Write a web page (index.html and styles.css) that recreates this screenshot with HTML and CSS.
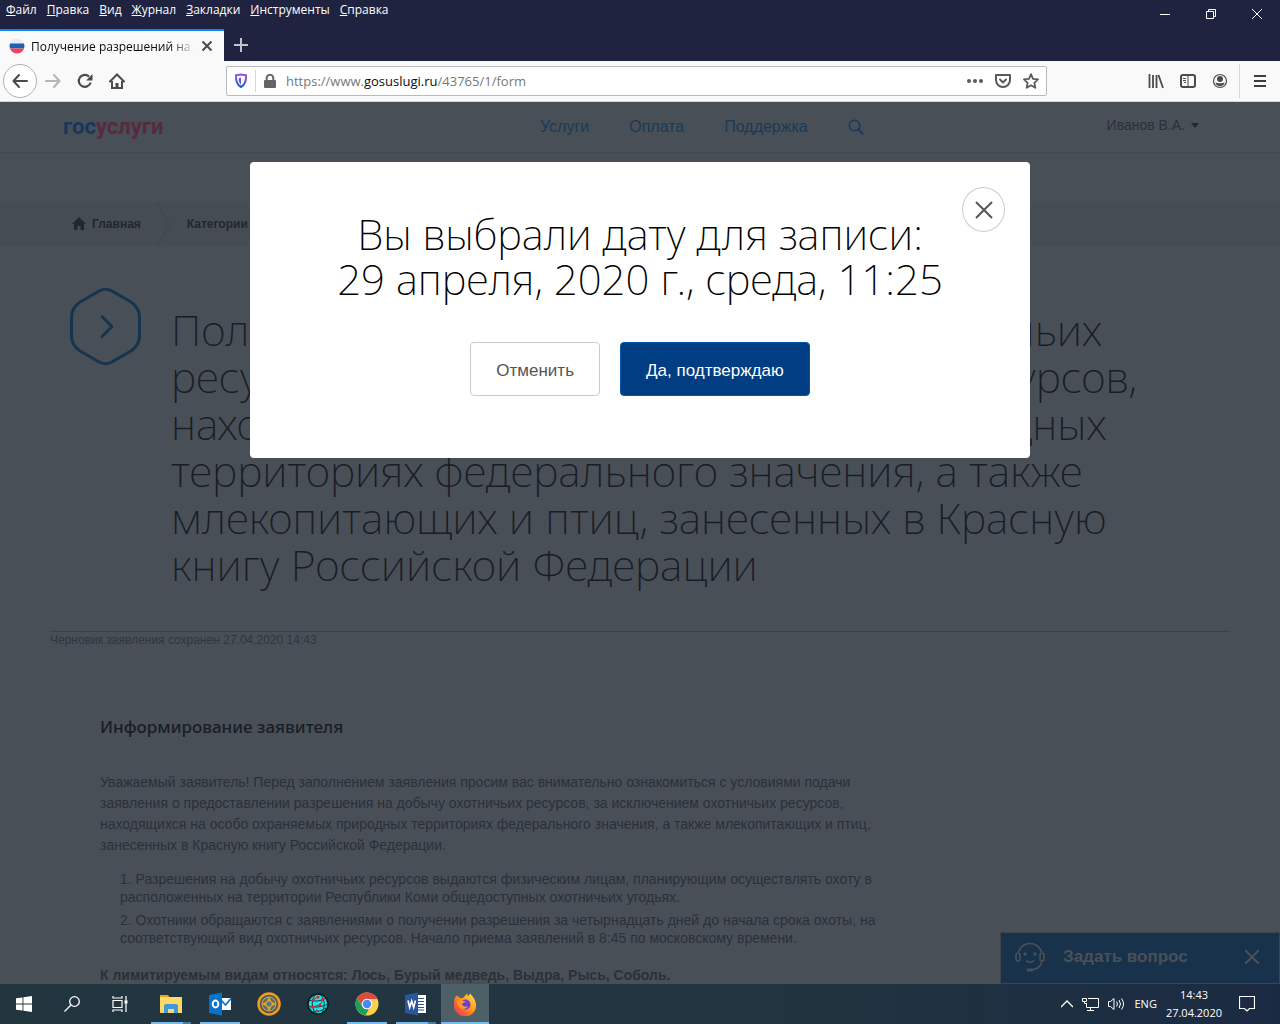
FILE: index.html
```
<!DOCTYPE html>
<html lang="ru">
  <head>
    <meta charset="utf-8">
    <title>Получение разрешений на добычу охотничьих ресурсов</title>
    <link rel="stylesheet" href="styles.css">
  </head>
  <body>
    <header class="browser">
      <div class="titlebar">
        <div class="titlebar-left">
          <nav class="menu">
            <a href="#"><u>Ф</u>айл</a>
            <a href="#"><u>П</u>равка</a>
            <a href="#"><u>В</u>ид</a>
            <a href="#"><u>Ж</u>урнал</a>
            <a href="#"><u>З</u>акладки</a>
            <a href="#"><u>И</u>нструменты</a>
            <a href="#"><u>С</u>правка</a>
          </nav>
          <div class="tabs">
            <div class="tab">
              <svg width="16" height="16" viewBox="0 0 16 16"><clipPath id="flag"><circle cx="8" cy="8" r="7.5"/></clipPath><g clip-path="url(#flag)"><path fill="#e9ecef" d="M0 0h16v6H0z"/><path fill="#1d5fb4" d="M0 5.5h16v5H0z"/><path fill="#f5405a" d="M0 10.5h16V16H0z"/></g></svg>
              <span class="tab-title">Получение разрешений на до</span>
              <button class="tab-close" aria-label="Закрыть вкладку"><svg width="12" height="12" viewBox="0 0 12 12"><path d="M1.5 1.5l9 9m0-9l-9 9" stroke="#4a4a4f" stroke-width="2"/></svg></button>
            </div>
            <button class="tab-new" aria-label="Новая вкладка"><svg width="14" height="14" viewBox="0 0 14 14"><path d="M7 0v14M0 7h14" stroke="#c3c3d0" stroke-width="2"/></svg></button>
          </div>
        </div>
        <div class="window-buttons">
          <button aria-label="Свернуть"><svg width="10" height="10"><path d="M0 5.5h10" stroke="#fff"/></svg></button>
          <button aria-label="Восстановить"><svg width="10" height="10" fill="none" stroke="#fff"><path d="M.5 2.500h7v7h-7zM2.500 2.500v-2h7v7h-2"/></svg></button>
          <button aria-label="Закрыть"><svg width="10" height="10"><path d="M0 0l10 10m0-10L0 10" stroke="#fff"/></svg></button>
        </div>
      </div>

      <div class="toolbar">
        <div class="tools">
          <button class="back" aria-label="Назад"><svg width="16" height="16" viewBox="0 0 16 16"><path d="M15 8H1.500M7 2L1.500 8 7 14" fill="none" stroke="#4a4a4f" stroke-width="2" stroke-linecap="round" stroke-linejoin="round"/></svg></button>
          <button aria-label="Вперёд"><svg width="16" height="16" viewBox="0 0 16 16"><path d="M1 8h13.500M9 2l5.500 6L9 14" fill="none" stroke="#b5b5b7" stroke-width="2" stroke-linecap="round" stroke-linejoin="round"/></svg></button>
          <button aria-label="Обновить"><svg width="16" height="16" viewBox="0 0 16 16"><path d="M13.600 9.500A6 6 0 1 1 12 3.600" fill="none" stroke="#4a4a4f" stroke-width="2.200"/><path d="M15.500 1v6.500H9z" fill="#4a4a4f"/></svg></button>
          <button aria-label="Домой"><svg width="16" height="16" viewBox="0 0 16 16" fill="none" stroke="#4a4a4f" stroke-width="2"><path d="M1 8.500L8 1.500l7 7" stroke-linecap="round"/><path d="M3 8v7h10V8"/><path d="M8 15v-5" stroke-width="3"/></svg></button>
        </div>
        <form class="urlbar">
          <svg width="14" height="16" viewBox="0 0 14 16"><defs><linearGradient id="sh" x2="0" y2="1"><stop stop-color="#8f55e8"/><stop offset="1" stop-color="#2b5fd9"/></linearGradient></defs><path d="M7 1.500c2 .5 3.500.7 5 .7.300 6-.5 9.500-5 11.800-4.500-2.300-5.300-5.800-5-11.800 1.500 0 3-.2 5-.7z" fill="none" stroke="url(#sh)" stroke-width="2"/><path d="M7 4.500v7C5 10 4.700 8 4.700 5z" fill="url(#sh)"/></svg>
          <span class="urlbar-line"></span>
          <svg width="12" height="14" viewBox="0 0 12 14"><path d="M2.700 7V4a3.300 3.300 0 0 1 6.600 0v3" fill="none" stroke="#666" stroke-width="2"/><rect y="6" width="12" height="8" rx="1" fill="#666"/></svg>
          <a class="url" href="#">https://www.<b>gosuslugi.ru</b>/43765/1/form</a>
          <svg width="16" height="16" viewBox="0 0 16 16" fill="#5a5a5d"><circle cx="2" cy="8" r="2"/><circle cx="8" cy="8" r="2"/><circle cx="14" cy="8" r="2"/></svg>
          <svg width="16" height="16" viewBox="0 0 16 16" fill="none" stroke="#5a5a5d" stroke-width="2" stroke-linejoin="round" stroke-linecap="round"><path d="M1 2h14v5a7 7 0 0 1-14 0z"/><path d="M5 6.500l3 3 3-3"/></svg>
          <svg width="16" height="16" viewBox="0 0 16 16"><path d="M8 1.200l2 4.600 5 .6-3.600 3.400.9 5L8 12.300l-4.300 2.500.9-5L1 6.400l5-.6z" fill="none" stroke="#5a5a5d" stroke-width="1.800" stroke-linejoin="round"/></svg>
        </form>
        <div class="tools tools-right">
          <button aria-label="Библиотека"><svg width="16" height="16" viewBox="0 0 16 16"><path d="M1.500 1v14M5 2v13M8.500 2v13M10.500 2l4.500 13" fill="none" stroke="#4a4a4f" stroke-width="1.800"/></svg></button>
          <button aria-label="Боковая панель"><svg width="16" height="16" viewBox="0 0 16 16" fill="none" stroke="#4a4a4f"><rect x="1" y="2" width="14" height="12" rx="2" stroke-width="2"/><path d="M8 2v12M3 5.500h3M3 7.500h3M4 9.500h2"/></svg></button>
          <button aria-label="Профиль"><svg width="16" height="16" viewBox="0 0 16 16" fill="#4a4a4f"><circle cx="8" cy="8" r="6.500" fill="none" stroke="#4a4a4f" stroke-width="1.200"/><circle cx="8" cy="6" r="3"/><path d="M3.500 9.500c2 1 7 1 9 0-.6 5-8.400 5-9 0z"/></svg></button>
        </div>
        <button class="burger" aria-label="Меню"><svg width="12" height="12"><path d="M0 1h12M0 6h12M0 11h12" stroke="#3c3c40" stroke-width="2"/></svg></button>
      </div>
    </header>

    <main class="page">
      <div class="site-header">
        <a class="logo" href="#">гос<span>услуги</span></a>
        <nav class="site-nav">
          <a href="#">Услуги</a>
          <a href="#">Оплата</a>
          <a href="#">Поддержка</a>
          <button aria-label="Поиск"><svg width="16" height="16" viewBox="0 0 16 16" fill="none" stroke="#1a3a5a"><circle cx="6.500" cy="6.500" r="5.300" stroke-width="1.600"/><path d="M10.500 10.500l4.500 4.500" stroke-width="2.200"/></svg></button>
        </nav>
        <a class="user" href="#">Иванов В.А.<span class="caret"></span></a>
      </div>

      <nav class="crumbs">
        <a href="#"><svg width="14" height="13" viewBox="0 0 14 13"><path d="M7 0l7 7h-2v6H8.500V9h-3v4H2V7H0z" fill="#23272e"/></svg>Главная</a>
        <svg class="crumb-arrow" width="14" height="43" viewBox="0 0 14 43"><path d="M0 0l13 21.500L0 43" fill="none" stroke="#41464e"/></svg>
        <a href="#">Категории услуг</a>
      </nav>

      <div class="service">
        <svg class="service-icon" width="72" height="78" viewBox="0 0 72 78" fill="none" stroke="#17344f" stroke-width="3" stroke-linecap="round" stroke-linejoin="round"><path d="M30 2.500q5.500-2.500 11 0L61 14q8.500 6 8.500 15v19q0 9-8.500 15L41 74.500q-5.500 2.500-11 0L10 63q-8.500-6-8.500-15V29q0-9 8.500-15z"/><path d="M32 28.500L42 38.500 32 48.500"/></svg>
        <h1>Получение разрешений на добычу охотничьих<br>ресурсов, за исключением охотничьих ресурсов,<br>находящихся на особо охраняемых природных<br>территориях федерального значения, а также<br>млекопитающих и птиц, занесенных в Красную<br>книгу Российской Федерации</h1>
      </div>

      <p class="draft">Черновик заявления сохранен 27.04.2020 14:43</p>

      <section class="info">
        <h2>Информирование заявителя</h2>
        <p>Уважаемый заявитель! Перед заполнением заявления просим вас внимательно ознакомиться с условиями подачи заявления о предоставлении разрешения на добычу охотничьих ресурсов, за исключением охотничьих ресурсов, находящихся на особо охраняемых природных территориях федерального значения, а также млекопитающих и птиц, занесенных в Красную книгу Российской Федерации.</p>
        <ol>
          <li>Разрешения на добычу охотничьих ресурсов выдаются физическим лицам, планирующим осуществлять охоту в расположенных на территории Республики Коми общедоступных охотничьих угодьях.</li>
          <li>Охотники обращаются с заявлениями о получении разрешения за четырнадцать дней до начала срока охоты, на соответствующий вид охотничьих ресурсов. Начало приема заявлений в 8:45 по московскому времени.</li>
        </ol>
        <p><strong>К лимитируемым видам относятся: Лось, Бурый медведь, Выдра, Рысь, Соболь.</strong></p>
      </section>

      <div class="chat">
        <svg width="30" height="30" viewBox="0 0 30 30" fill="none" stroke="#4a5058" stroke-width="1.600" stroke-linecap="round"><path d="M3.500 9.500C6 4 10 1.500 15 1.500S24 4 26.500 9.500"/><rect x="1" y="11" width="4" height="8" rx="2"/><rect x="25" y="11" width="4" height="8" rx="2"/><path d="M27 19c-1 5-4 8-9 8.500"/><path d="M13 28h4" stroke-width="3"/><path d="M11.500 19q3.500 2.500 7 0"/><g fill="#4a5058" stroke="none"><circle cx="10" cy="12" r="1.700"/><circle cx="20" cy="12" r="1.700"/></g></svg>
        <a href="#">Задать вопрос</a>
        <button aria-label="Закрыть чат"><svg width="14" height="14"><path d="M0 0l14 14m0-14L0 14" stroke="#4a5058" stroke-width="2"/></svg></button>
      </div>

      <div class="modal" role="dialog" aria-labelledby="modal-title">
        <button class="modal-close" aria-label="Закрыть"><svg width="18" height="18"><path d="M1 1l16 16m0-16L1 17" stroke="#555" stroke-width="2"/></svg></button>
        <div class="modal-title" id="modal-title">Вы выбрали дату для записи:<br>29 апреля, 2020 г., среда, 11:25</div>
        <div class="modal-buttons">
          <button class="btn">Отменить</button>
          <button class="btn btn-primary">Да, подтверждаю</button>
        </div>
      </div>
    </main>

    <footer class="taskbar">
      <div class="start">
        <button aria-label="Пуск"><svg width="16" height="16" viewBox="0 0 16 16" fill="#fff"><path d="M0 2.300L6.500 1.400v6.200H0zM7.400 1.200L16 0v7.600H7.400zM0 8.400h6.500v6.200L0 13.700zM7.400 8.400H16V16l-8.600-1.200z"/></svg></button>
        <button aria-label="Поиск"><svg width="16" height="16" viewBox="0 0 16 16" fill="none" stroke="#fff" stroke-width="1.300"><circle cx="10.500" cy="5.500" r="4.800"/><path d="M7 9L.5 15.500"/></svg></button>
        <button aria-label="Представление задач"><svg width="16" height="16" viewBox="0 0 16 16" fill="none" stroke="#fff" stroke-width="1.200"><path d="M1 4.500h9v7H1zM1 0v2h9V0M1 16v-2h9v2M14 0v16"/><path d="M12.500 4.500h3v3h-3z" fill="#fff" stroke="none"/></svg></button>
      </div>
      <div class="apps">
        <button class="open many" aria-label="Проводник"><svg width="22" height="20" viewBox="0 0 22 20"><path fill="#e8a317" d="M0 1h8l2 3h-10z"/><path fill="#ffd965" d="M0 3h22v16H0z"/><path fill="#4097db" d="M4 19v-7q0-2 2-2h10q2 0 2 2v7h-4v-4H8v4z"/></svg></button>
        <button class="open" aria-label="Outlook"><svg width="24" height="24" viewBox="0 0 24 24"><path fill="#fff" d="M13 6h10v12H13z"/><path d="M13 8l4.500 5L23 6.500" fill="none" stroke="#0b72c9" stroke-width="1.800"/><path fill="#0b72c9" d="M1 3l13-2.500v23L1 21z"/><ellipse cx="7.500" cy="12" rx="2.800" ry="3.500" fill="none" stroke="#fff" stroke-width="2"/></svg></button>
        <button aria-label="Компас"><svg width="24" height="24" viewBox="0 0 24 24"><circle cx="12" cy="12" r="10.500" fill="#45585a" stroke="#f39a1d" stroke-width="2.500"/><circle cx="12" cy="12" r="7" fill="#6e6a45" stroke="#dfb765"/><path d="M12 5l2.500 4.500L19 12l-4.500 2.500L12 19l-2.500-4.500L5 12l4.500-2.500z" fill="#d9a542"/><circle cx="12" cy="12" r="2.500" fill="#547b7a"/></svg></button>
        <button aria-label="Сеть"><svg width="24" height="24" viewBox="0 0 24 24"><circle cx="12" cy="12" r="10" fill="#20e5e8" stroke="#071a20" stroke-width="1.500"/><path d="M3 8c6 2 12 1 17-2M2 14c7 2 14 1 20-2M6 20c5 0 10-1 14-4M10 2c-5 6-5 13 0 20M14 2c5 6 6 13 1 20" fill="none" stroke="#053c44"/><path d="M7 8l5-3M6 15l8-2 3-6" stroke="#d2232a" fill="none"/><g fill="#e3222b"><circle cx="7" cy="8" r="1.500"/><circle cx="12" cy="5" r="1.500"/><circle cx="6" cy="15" r="1.500"/><circle cx="14" cy="13" r="1.500"/><circle cx="11" cy="19" r="1.500"/><circle cx="17" cy="7" r="1.500"/></g></svg></button>
        <button class="open" aria-label="Chrome"><svg width="24" height="24" viewBox="0 0 24 24"><circle cx="12" cy="12" r="11.500" fill="#fcd04b"/><path fill="#db4b3d" d="M2 6.200A11.500 11.500 0 0 1 22.300 7H12a5 5 0 0 0-4.500 7z"/><path fill="#1d9e5c" d="M2 6.200l5.500 8.200A5 5 0 0 0 14 16.500L10.500 23.400A11.500 11.500 0 0 1 2 6.200z"/><circle cx="12" cy="12" r="5.300" fill="#f3f6f8"/><circle cx="12" cy="12" r="4.200" fill="#4a8af4"/></svg></button>
        <button class="open many" aria-label="Word"><svg width="24" height="24" viewBox="0 0 24 24"><path fill="#fff" d="M12 3h10v18H12z"/><path d="M13 6.500h7M13 9.500h7M13 12.500h7M13 15.500h7M13 18h7" stroke="#2b579a"/><path fill="#2b579a" d="M1 3l13-2.500v23L1 21z"/><path d="M4 8.500l1.700 7L7.700 9l2 6.500 1.700-7" fill="none" stroke="#fff" stroke-width="1.600"/></svg></button>
        <button class="open active" aria-label="Firefox"><svg width="24" height="24" viewBox="0 0 24 24"><defs><linearGradient id="ff" x1="1" x2="0" y2="1"><stop stop-color="#fff04a"/><stop offset=".5" stop-color="#ff8b1a"/><stop offset="1" stop-color="#ec1f63"/></linearGradient></defs><path d="M2 5.500l2-2 3 2.500h3l4-4.500 1 3 2-3c3 3 6 7 6 12a11 11 0 0 1-22 0c0-3 0-5 1-8z" fill="url(#ff)"/><circle cx="12.500" cy="12.500" r="5" fill="#6a3fd0"/><path d="M4 9c3-1 6-1 9 1-2 0-3 1-4 2 1 3 4 3 6 2-2 5-11 4-11-5z" fill="#ff9628"/></svg></button>
      </div>
      <div class="tray">
        <svg width="12" height="8" viewBox="0 0 12 8"><path d="M0 7l6-6 6 6" fill="none" stroke="#fff" stroke-width="1.300"/></svg>
        <svg width="17" height="15" viewBox="0 0 17 15" fill="none" stroke="#fff"><path d="M6 1.500h10.500v9h-12V6M5 13.500h7M8.500 10.500v3M.5 1.500h4v3h-4zM2.500 4.500v2h2"/></svg>
        <svg width="17" height="14" viewBox="0 0 17 14" fill="none" stroke="#fff"><path d="M.5 4.500h2L6 1.500v11l-3.500-3h-2zM8.500 4.500q2 2.500 0 5M11 3q3 4 0 8M13.500 1.500q4 5.500 0 11"/></svg>
        <span>ENG</span>
        <time>14:43<br>27.04.2020</time>
        <svg width="16" height="16" viewBox="0 0 16 16"><path d="M.5.5h15v12h-5L8 15l-2.500-2.500h-5z" fill="none" stroke="#fff" stroke-width="1.200"/></svg>
      </div>
    </footer>
  </body>
</html>
```
FILE: styles.css
```
* {
  box-sizing: border-box;
}

html {
  height: 100%;
}

body {
  display: flex;
  flex-direction: column;
  height: 100%;
  margin: 0;
  font-family: "Liberation Sans", Arial, sans-serif;
  font-size: 14px;
}

a {
  color: inherit;
  text-decoration: none;
}

button {
  display: flex;
  align-items: center;
  justify-content: center;
  padding: 0;
  border: 0;
  background: none;
  font: inherit;
}

svg {
  display: block;
  flex: none;
}

/* browser window */

.browser {
  flex: none;
  font-family: "Open Sans", "Noto Sans", sans-serif;
  font-size: 12px;
}

.titlebar {
  display: flex;
  justify-content: space-between;
  height: 61px;
  background: #202340;
  color: #fff;
}

.titlebar-left {
  display: flex;
  flex-direction: column;
  justify-content: space-between;
}

.menu {
  display: flex;
  gap: 10px;
  padding-left: 6px;
  line-height: 20px;
}

.tabs {
  display: flex;
  height: 32px;
}

.tab {
  display: flex;
  align-items: center;
  gap: 6px;
  width: 224px;
  padding: 0 11px 0 9px;
  border-top: 2px solid #0a84ff;
  background: #f9f9fa;
  color: #0c0c0d;
}

.tab-title {
  flex: 1;
  overflow: hidden;
  white-space: nowrap;
  -webkit-mask-image: linear-gradient(to left, transparent, #000 24px);
  mask-image: linear-gradient(to left, transparent, #000 24px);
}

.tab-new {
  width: 34px;
}

.window-buttons {
  display: flex;
  align-items: flex-start;
}

.window-buttons button {
  width: 46px;
  height: 28px;
}

.toolbar {
  display: flex;
  align-items: center;
  height: 41px;
  padding-left: 3px;
  border-bottom: 1px solid #d7d7db;
  background: #f9f9fa;
}

.tools {
  display: flex;
  align-items: center;
  width: 223px;
}

.tools button {
  width: 32px;
  height: 32px;
}

.tools .back {
  width: 34px;
  height: 34px;
  border: 1px solid #b1b1b5;
  border-radius: 50%;
  background: #fff;
}

.urlbar {
  display: flex;
  flex: 1;
  align-items: center;
  gap: 12px;
  height: 30px;
  padding: 0 7px;
  border: 1px solid #b9b9bb;
  border-radius: 2px;
  background: #fff;
}

.urlbar-line {
  width: 1px;
  height: 22px;
  margin: 0 -4px 0 -5px;
  background: #d7d7db;
}

.url {
  flex: 1;
  margin-left: -2px;
  color: #777;
  font-size: 13px;
}

.url b {
  color: #0c0c0d;
  font-weight: 400;
}

.tools-right {
  justify-content: flex-end;
  width: 189px;
}

.burger {
  width: 41px;
  height: 34px;
  margin-left: 3px;
  border-left: 1px solid #d7d7db;
}

/* site, dimmed under the dialog */

.page {
  position: relative;
  flex: 1;
  min-height: 0;
  overflow: hidden;
  background: #494f57;
  color: #2b303a;
}

.site-header {
  display: grid;
  grid-template-columns: 477px 1fr auto;
  align-items: center;
  height: 51px;
  padding: 0 81px 0 63px;
  border-bottom: 1px solid #444a52;
}

.logo {
  color: #17375a;
  font: 700 22px/24px Roboto, sans-serif;
}

.logo span {
  color: #572b3d;
}

.site-nav {
  display: flex;
  align-items: center;
  gap: 40px;
  color: #1a3a5a;
  font-size: 16px;
}

.user {
  display: flex;
  align-items: center;
  gap: 6px;
  padding-bottom: 4px;
}

.caret {
  border: 4px solid transparent;
  border-top: 5px solid #23272e;
  border-bottom: 0;
}

.crumbs {
  display: flex;
  align-items: center;
  gap: 16px;
  height: 43px;
  margin-top: 50px;
  padding-left: 72px;
  background: #464c54;
  color: #23272e;
  font-size: 12px;
  font-weight: 700;
}

.crumbs a {
  display: flex;
  gap: 6px;
  padding-bottom: 2px;
}

.service {
  display: flex;
  gap: 29px;
  padding: 42px 50px 0 70px;
}

h1 {
  margin: 18px 0 0;
  color: #191d25;
  font: 200 43px/47px "Noto Sans", "Open Sans", sans-serif;
  white-space: nowrap;
}

.draft {
  margin: 43px 50px 0;
  border-top: 1px solid #3c424a;
  color: #31363e;
  font-size: 12px;
  line-height: 17px;
}

.info {
  max-width: 900px;
  padding: 67px 0 0 100px;
}

h2 {
  margin: 0 0 34px;
  color: #191d25;
  font: 500 17px/22px "Noto Sans", "Open Sans", sans-serif;
}

.info p {
  margin: 0;
  line-height: 21px;
}

.info ol {
  margin: 14px 0;
  padding-left: 20px;
  list-style-position: inside;
  line-height: 18px;
}

.info li {
  margin-bottom: 5px;
}

.info ol + p {
  padding-top: 4px;
}

.chat {
  position: absolute;
  right: 0;
  bottom: 0;
  display: flex;
  align-items: center;
  gap: 18px;
  width: 280px;
  height: 52px;
  padding: 0 20px 2px 14px;
  border: 1px solid #3d444c;
  background: #18324b;
  color: #4a5058;
  font-size: 17px;
  font-weight: 700;
}

.chat a {
  flex: 1;
}

.modal {
  position: absolute;
  top: 60px;
  left: 50%;
  width: 780px;
  padding: 49px 60px 62px;
  border-radius: 4px;
  background: #fff;
  transform: translateX(-50%);
}

.modal-title {
  color: #000;
  font: 200 42px/45px "Noto Sans", "Open Sans", sans-serif;
  text-align: center;
  white-space: nowrap;
}

.modal-close {
  position: absolute;
  top: 25px;
  right: 25px;
  width: 43px;
  height: 45px;
  border: 1px solid #ccc;
  border-radius: 50%;
}

.modal-buttons {
  display: flex;
  justify-content: center;
  gap: 20px;
  margin-top: 41px;
}

.btn {
  height: 54px;
  padding: 3px 25px 0;
  border: 1px solid #ccc;
  border-radius: 4px;
  color: #555;
  font-size: 17px;
}

.btn-primary {
  border-color: #0059a8;
  background: #003d82;
  color: #fff;
}

/* windows taskbar */

.taskbar {
  display: flex;
  flex: none;
  height: 40px;
  background: linear-gradient(to right, #21363f, #20353f 60%, #1b2a43);
  color: #fff;
  font: 11px/18px "Open Sans", "Noto Sans", sans-serif;
}

.start,
.apps {
  display: flex;
}

.start button {
  width: 48px;
}

.apps {
  gap: 1px;
  padding-left: 3px;
}

.apps button {
  position: relative;
  width: 48px;
}

.apps .open::after {
  content: "";
  position: absolute;
  right: 4px;
  bottom: 0;
  left: 4px;
  height: 2px;
  background: #76b9ed;
}

.apps .many::after {
  background: linear-gradient(to right, #76b9ed 32px, #4d7c9c 32px);
}

.apps .active {
  background: #4d6068;
}

.apps .active::after {
  right: 0;
  left: 0;
}

.tray {
  display: flex;
  align-items: center;
  gap: 9px;
  margin-left: auto;
  padding-right: 25px;
}

.tray time {
  margin-right: 8px;
  text-align: center;
}
```
